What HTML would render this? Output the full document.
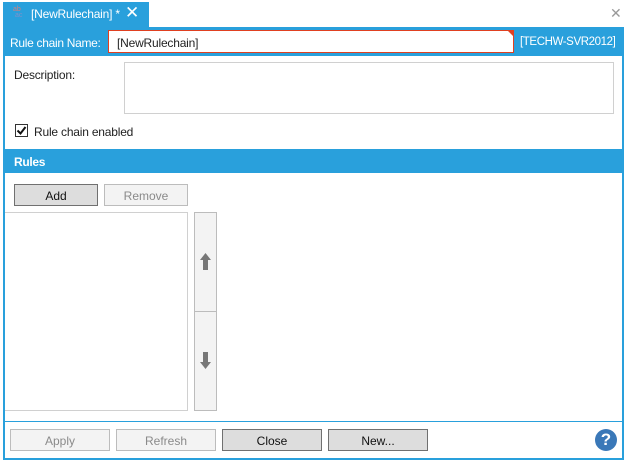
<!DOCTYPE html>
<html><head><style>
*{margin:0;padding:0;box-sizing:border-box}
body{width:627px;height:463px;background:#fff;font-family:"Liberation Sans",sans-serif;font-size:12px;color:#222;position:relative;overflow:hidden}
.a{position:absolute}
.btn{position:absolute;height:22px;border:1px solid #707070;background:#dddddd;text-align:center;line-height:22px;font-size:12px;color:#111}
.dis{border-color:#bcbcbc;background:#f3f3f3;color:#8a8a8a}
</style></head><body>
<div class="a" style="left:3px;top:2px;width:146px;height:25px;background:#29a0dc"></div>
<div class="a" style="left:13px;top:7px;font-size:7px;line-height:6px;color:#d08080">ab<br><span style="color:#8090c8">&nbsp;ac</span></div>
<div class="a" style="left:31px;top:7px;color:#fff;font-size:12px;letter-spacing:-0.2px">[NewRulechain] *</div>
<div class="a" style="left:125px;top:3px;color:#fff;font-size:17px">✕</div>
<div class="a" style="left:610px;top:5px;color:#999;font-size:14px">✕</div>
<div class="a" style="left:3px;top:27px;width:621px;height:29px;background:#29a0dc"></div>
<div class="a" style="left:3px;top:27px;width:2px;height:433px;background:#29a0dc"></div>
<div class="a" style="left:622px;top:27px;width:2px;height:433px;background:#29a0dc"></div>
<div class="a" style="left:3px;top:458px;width:621px;height:2px;background:#29a0dc"></div>
<div class="a" style="left:10px;top:36px;color:#fff;letter-spacing:-0.3px">Rule chain Name:</div>
<div class="a" style="left:108px;top:30px;width:406px;height:23px;background:#fff;border:1px solid #e04020"></div>
<div class="a" style="left:508px;top:31px;width:0;height:0;border-top:5px solid #e04020;border-left:5px solid transparent"></div>
<div class="a" style="left:117px;top:36px;letter-spacing:-0.2px">[NewRulechain]</div>
<div class="a" style="left:520px;top:36px;color:#fff;font-size:11.5px;letter-spacing:-0.4px">[TECHW-SVR2012]</div>
<div class="a" style="left:14px;top:68px;letter-spacing:-0.2px">Description:</div>
<div class="a" style="left:124px;top:62px;width:490px;height:52px;border:1px solid #d0d0d0"></div>
<div class="a" style="left:15px;top:124px;width:13px;height:13px;border:1px solid #333"></div>
<svg class="a" style="left:15px;top:124px" width="13" height="13"><path d="M2.5 6.5L5.5 9.5L10.5 3" stroke="#111" stroke-width="2" fill="none"/></svg>
<div class="a" style="left:34px;top:125px;letter-spacing:-0.2px">Rule chain enabled</div>
<div class="a" style="left:3px;top:149px;width:621px;height:24px;background:#29a0dc"></div>
<div class="a" style="left:14px;top:155px;color:#fff;font-weight:bold;letter-spacing:-0.3px">Rules</div>
<div class="btn" style="left:14px;top:184px;width:84px">Add</div>
<div class="btn dis" style="left:104px;top:184px;width:84px">Remove</div>
<div class="a" style="left:5px;top:212px;width:183px;height:199px;border:1px solid #d0d0d0;border-left:none"></div>
<div class="a" style="left:194px;top:212px;width:23px;height:100px;border:1px solid #bcbcbc;background:#f3f3f3"></div>
<div class="a" style="left:194px;top:311px;width:23px;height:100px;border:1px solid #bcbcbc;background:#f3f3f3"></div>
<svg class="a" style="left:199px;top:253px" width="13" height="18"><path d="M6.5 0L12 7H9V17H4V7H1Z" fill="#777"/></svg>
<svg class="a" style="left:199px;top:352px" width="13" height="18"><path d="M6.5 17L12 10H9V0H4V10H1Z" fill="#777"/></svg>
<div class="a" style="left:5px;top:421px;width:617px;height:1px;background:#29a0dc"></div>
<div class="btn dis" style="left:10px;top:429px;width:100px">Apply</div>
<div class="btn dis" style="left:116px;top:429px;width:100px">Refresh</div>
<div class="btn" style="left:222px;top:429px;width:100px">Close</div>
<div class="btn" style="left:328px;top:429px;width:100px">New...</div>
<div class="a" style="left:595px;top:429px;width:22px;height:22px;border-radius:50%;background:#3a78b8;color:#fff;font-weight:bold;font-size:17px;text-align:center;line-height:22px">?</div>
</body></html>
